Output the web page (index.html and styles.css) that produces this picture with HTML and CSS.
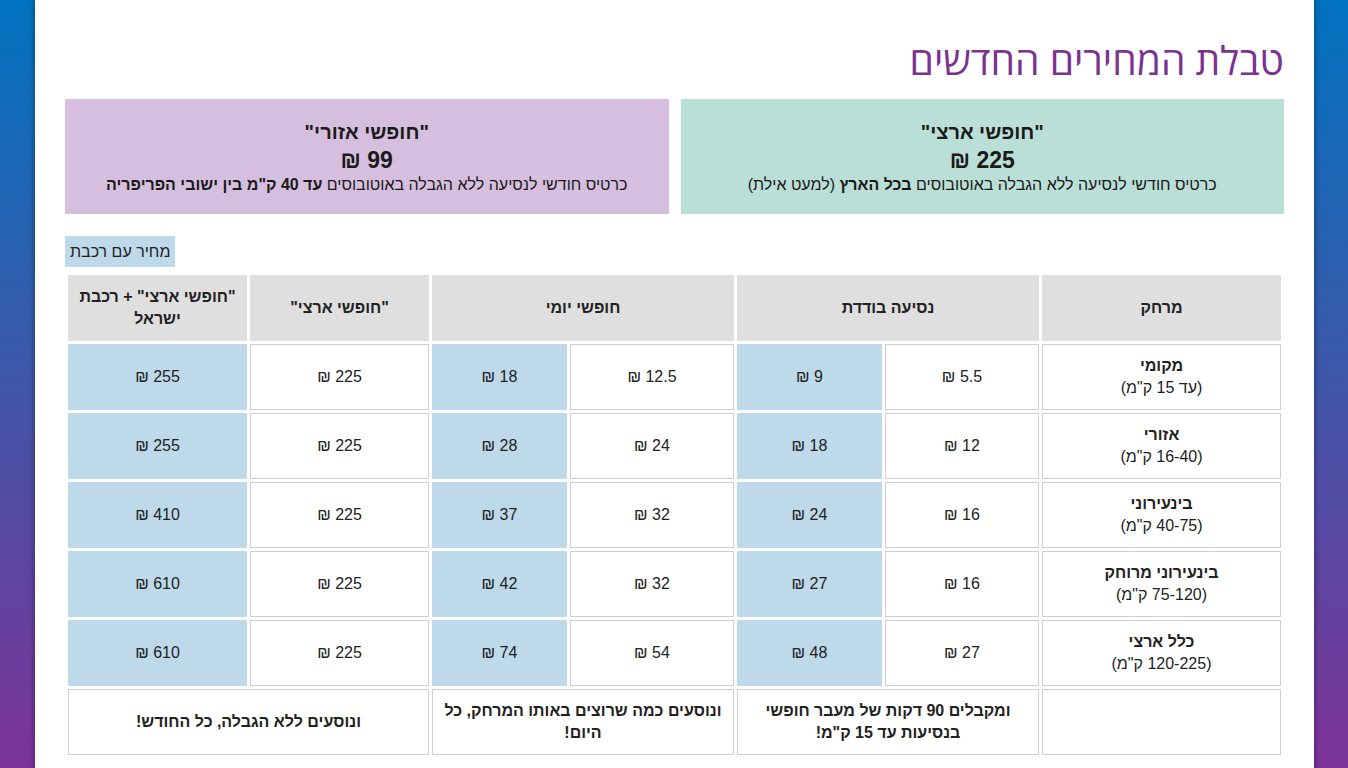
FILE: index.html
```html
<!DOCTYPE html>
<html lang="he" dir="rtl">
<head>
<meta charset="utf-8">
<title>טבלת המחירים החדשים</title>
<link rel="stylesheet" href="styles.css">
</head>
<body>
<main class="panel">
  <h1 class="title">טבלת המחירים החדשים</h1>
  <section class="plans">
    <div class="plan plan-national">
      <div class="plan-name">"חופשי ארצי"</div>
      <div class="plan-price">225 ₪</div>
      <div class="plan-desc">כרטיס חודשי לנסיעה ללא הגבלה באוטובוסים <b>בכל הארץ</b> (למעט אילת)</div>
    </div>
    <div class="plan plan-regional">
      <div class="plan-name">"חופשי אזורי"</div>
      <div class="plan-price">99 ₪</div>
      <div class="plan-desc">כרטיס חודשי לנסיעה ללא הגבלה באוטובוסים <b>עד 40 ק"מ בין ישובי הפריפריה</b></div>
    </div>
  </section>
  <div class="toolbar"><button class="train-btn" type="button">מחיר עם רכבת</button></div>
  <table class="prices">
    <colgroup>
      <col class="c-dist"><col class="c-2"><col class="c-3"><col class="c-4"><col class="c-5"><col class="c-6"><col class="c-7">
    </colgroup>
    <thead>
      <tr>
        <th>מרחק</th>
        <th colspan="2">נסיעה בודדת</th>
        <th colspan="2">חופשי יומי</th>
        <th>"חופשי ארצי"</th>
        <th class="th-tight">"חופשי ארצי" + רכבת ישראל</th>
      </tr>
    </thead>
    <tbody>
      <tr>
        <td class="dist"><b>מקומי</b><br>(עד 15 ק"מ)</td>
        <td>5.5 ₪</td><td class="hl">9 ₪</td>
        <td>12.5 ₪</td><td class="hl">18 ₪</td>
        <td>225 ₪</td><td class="hl">255 ₪</td>
      </tr>
      <tr>
        <td class="dist"><b>אזורי</b><br>(16-40 ק"מ)</td>
        <td>12 ₪</td><td class="hl">18 ₪</td>
        <td>24 ₪</td><td class="hl">28 ₪</td>
        <td>225 ₪</td><td class="hl">255 ₪</td>
      </tr>
      <tr>
        <td class="dist"><b>בינעירוני</b><br>(40-75 ק"מ)</td>
        <td>16 ₪</td><td class="hl">24 ₪</td>
        <td>32 ₪</td><td class="hl">37 ₪</td>
        <td>225 ₪</td><td class="hl">410 ₪</td>
      </tr>
      <tr>
        <td class="dist"><b>בינעירוני מרוחק</b><br>(75-120 ק"מ)</td>
        <td>16 ₪</td><td class="hl">27 ₪</td>
        <td>32 ₪</td><td class="hl">42 ₪</td>
        <td>225 ₪</td><td class="hl">610 ₪</td>
      </tr>
      <tr>
        <td class="dist"><b>כלל ארצי</b><br>(120-225 ק"מ)</td>
        <td>27 ₪</td><td class="hl">48 ₪</td>
        <td>54 ₪</td><td class="hl">74 ₪</td>
        <td>225 ₪</td><td class="hl">610 ₪</td>
      </tr>
      <tr class="notes">
        <td></td>
        <td colspan="2">ומקבלים 90 דקות של מעבר חופשי בנסיעות עד 15 ק"מ!</td>
        <td colspan="2">ונוסעים כמה שרוצים באותו המרחק, כל היום!</td>
        <td colspan="2">ונוסעים ללא הגבלה, כל החודש!</td>
      </tr>
    </tbody>
  </table>
</main>
</body>
</html>
```

FILE: styles.css
```css
html, body {
  margin: 0;
  padding: 0;
}
body {
  min-height: 768px;
  background: linear-gradient(180deg, #0072bf 0%, #3f56a8 50%, #7e3399 100%);
  background-attachment: fixed;
  font-family: "Liberation Sans", Arial, sans-serif;
  font-size: 16px;
  color: #222;
  overflow: hidden;
}
.panel {
  margin: 0 34px 0 35px;
  background: #fff;
  padding: 30px 30px 40px;
  min-height: 800px;
  box-shadow: 0 0 6px rgba(0, 0, 0, 0.45);
}
.title {
  font-family: "Open Sans", "Liberation Sans", sans-serif;
  font-weight: 400;
  font-size: 39px;
  line-height: 50px;
  color: #7a3390;
  margin: 5px 0 14px;
}
.plans {
  display: flex;
  gap: 12px;
  margin-bottom: 22px;
}
.plan {
  flex: 1;
  text-align: center;
  padding: 19px 20px 18px;
  color: #1a1a1a;
}
.plan-national { background: #badfd6; }
.plan-regional { background: #d6bfde; }
.plan-name {
  font-weight: bold;
  font-size: 20px;
  line-height: 28px;
}
.plan-price {
  font-weight: bold;
  font-size: 23px;
  line-height: 28px;
}
.plan-desc {
  font-size: 16px;
  line-height: 22px;
}
.toolbar {
  display: flex;
  justify-content: flex-end;
  margin-bottom: 5px;
}
.train-btn {
  font-family: "Liberation Sans", Arial, sans-serif;
  font-size: 16px;
  color: #222;
  background: #bdd9ea;
  border: none;
  padding: 0 5px;
  height: 31px;
}
.prices {
  width: 100%;
  table-layout: fixed;
  border-collapse: separate;
  border-spacing: 3px;
}
.c-dist { width: 239px; }
.c-2 { width: 154px; }
.c-3 { width: 145px; }
.c-4 { width: 164px; }
.c-5 { width: 135px; }
.c-6 { width: 179px; }
.c-7 { width: 179px; }
.prices th {
  background: #dfdfdf;
  border: 1px solid #dfdfdf;
  font-weight: bold;
  height: 64px;
  padding: 0 10px;
  line-height: 22px;
  text-align: center;
}
.prices th.th-tight {
  padding: 0 4px;
}
.prices td {
  border: 1px solid #cfcfcf;
  background: #fff;
  height: 64px;
  padding: 0 10px;
  text-align: center;
  line-height: 22px;
}
.prices td.hl {
  background: #bdd9ea;
  border-color: #bdd9ea;
}
.prices .notes td {
  font-weight: bold;
  padding: 0 4px;
}
```
